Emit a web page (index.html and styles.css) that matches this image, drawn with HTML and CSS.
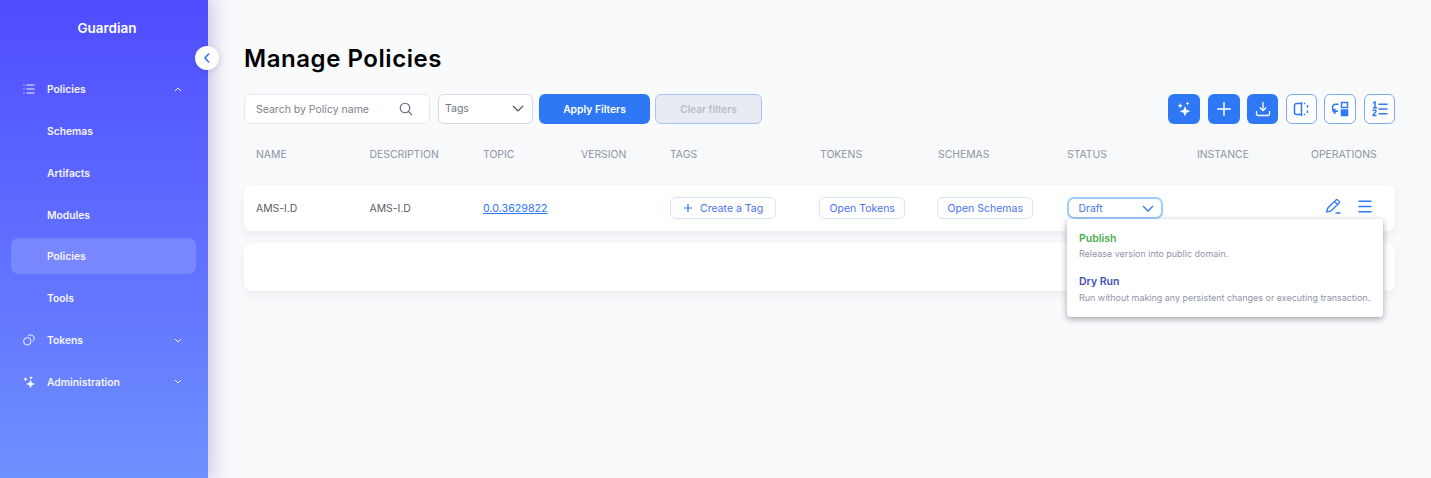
FILE: index.html
```html
<!DOCTYPE html>
<html lang="en">
<head>
<meta charset="utf-8">
<title>Manage Policies</title>
<link rel="stylesheet" href="styles.css">
</head>
<body>
<div class="app">
  <aside class="sidebar">
    <div class="brand">Guardian</div>
    <nav class="nav">
      <a class="nav-item">
        <svg class="nav-icon" viewBox="0 0 12 12"><path d="M3.500 2h8M3.500 6h8M3.500 10h8M.5 2h1M.5 6h1M.5 10h1"/></svg>
        <span class="nav-label">Policies</span>
        <svg class="nav-caret" viewBox="0 0 8 5"><path d="M1 4l3-3 3 3"/></svg>
      </a>
      <a class="nav-item">
        <span class="nav-label">Schemas</span>
      </a>
      <a class="nav-item">
        <span class="nav-label">Artifacts</span>
      </a>
      <a class="nav-item">
        <span class="nav-label">Modules</span>
      </a>
      <a class="nav-item active">
        <span class="nav-label">Policies</span>
      </a>
      <a class="nav-item">
        <span class="nav-label">Tools</span>
      </a>
      <a class="nav-item">
        <svg class="nav-icon" viewBox="0 0 12 12"><circle cx="4.300" cy="7.300" r="3.700"/><path d="M4.800 2.200A3.700 3.700 0 0 1 11.300 4.300a3.700 3.700 0 0 1-1.800 3.100"/></svg>
        <span class="nav-label">Tokens</span>
        <svg class="nav-caret" viewBox="0 0 8 5"><path d="M1 1l3 3 3-3"/></svg>
      </a>
      <a class="nav-item">
        <svg class="nav-icon solid" viewBox="0 0 12 12"><path d="M7.500 3.500l1.300 3.200 3.200 1.300-3.200 1.300-1.300 3.200-1.300-3.200L3 8l3.200-1.300zM2.500 1l.7 1.500 1.500.7-1.500.7-.7 1.500-.7-1.500-1.500-.7 1.500-.7zM8 0l.6 1.200 1.200.6-1.200.6L8 3.600l-.6-1.200-1.200-.6 1.200-.6z"/></svg>
        <span class="nav-label">Administration</span>
        <svg class="nav-caret" viewBox="0 0 8 5"><path d="M1 1l3 3 3-3"/></svg>
      </a>
    </nav>
  </aside>
  <button class="collapse" aria-label="Collapse">
    <svg viewBox="0 0 8 12"><path d="M6 1.500L2 6l4 4.500"/></svg>
  </button>

  <main class="main">
    <h1 class="title">Manage Policies</h1>

    <div class="toolbar">
      <div class="search">
        <span class="search-text">Search by Policy name</span>
        <svg class="search-icon" viewBox="0 0 14 14"><circle cx="6" cy="6" r="4.800"/><path d="M9.500 9.500l3.500 3.500"/></svg>
      </div>
      <div class="tags-select">
        <span>Tags</span>
        <svg viewBox="0 0 12 7"><path d="M1 1l5 5 5-5"/></svg>
      </div>
      <button class="btn-apply">Apply Filters</button>
      <button class="btn-clear">Clear filters</button>
      <div class="actions">
        <button class="act solid" aria-label="AI search">
          <svg viewBox="0 0 16 16" class="fill"><path d="M9 5l1.500 3.800L14.300 10.300l-3.800 1.500L9 15.600l-1.500-3.800-3.800-1.500 3.800-1.500zM4.200 2l.8 1.900 1.900.8-1.900.8-.8 1.900-.8-1.900-1.900-.8 1.900-.8zM11.500 .6l.6 1.300 1.300.6-1.300.6-.6 1.300-.6-1.300-1.300-.6 1.300-.6z"/></svg>
        </button>
        <button class="act solid" aria-label="Create">
          <svg viewBox="0 0 14 14"><path d="M7 1v12M1 7h12"/></svg>
        </button>
        <button class="act solid narrow" aria-label="Import">
          <svg viewBox="0 0 16 16"><path d="M8 1v8.500M4.800 6.500L8 9.700l3.200-3.200M1.500 10v2.800a1.700 1.700 0 0 0 1.700 1.700h9.600a1.700 1.700 0 0 0 1.700-1.700V10"/></svg>
        </button>
        <button class="act outline narrow" aria-label="Compare">
          <svg class="bold" viewBox="0 0 16 16"><path d="M8.500 2.500H3.500a2 2 0 0 0-2 2v7a2 2 0 0 0 2 2h5zM8.500 1v14M10.800 2.500h1.500M10.800 13.500h1.500M14.500 4v2.500M14.500 9.500V12"/></svg>
        </button>
        <button class="act outline" aria-label="Wizard">
          <svg class="wide bold" viewBox="0 0 18 16"><path d="M10.500 1.500h6v5h-6zM7.500 3.200H5a3.600 3.600 0 0 0-3.500 3.600A3.600 3.600 0 0 0 4.500 10.300H7M4.500 8l-2.300 2.300 2.300 2.300"/><path class="fillpath" d="M10.500 9h6v5.500h-6z"/></svg>
        </button>
        <button class="act outline narrow" aria-label="List">
          <svg class="bold" viewBox="0 0 16 16"><path d="M6.500 3.200h9M6.500 8h9M6.500 12.800h9M1.300 2.200L3 1v5.500M1 6.700h4M1 10.300a1.500 1.500 0 0 1 3 .2c0 1.300-3 2.400-3 4h3.600"/></svg>
        </button>
      </div>
    </div>

    <div class="table">
      <div class="row head">
        <div>NAME</div><div>DESCRIPTION</div><div>TOPIC</div><div>VERSION</div><div>TAGS</div><div>TOKENS</div><div>SCHEMAS</div><div>STATUS</div><div>INSTANCE</div><div>OPERATIONS</div>
      </div>
      <div class="row body">
        <div>AMS-I.D</div>
        <div>AMS-I.D</div>
        <div><a class="link">0.0.3629822</a></div>
        <div></div>
        <div><button class="pill tag"><svg viewBox="0 0 10 10"><path d="M5 1v8M1 5h8"/></svg>Create a Tag</button></div>
        <div><button class="pill shifted">Open Tokens</button></div>
        <div><button class="pill shifted">Open Schemas</button></div>
        <div class="status-cell">
          <div class="status"><span>Draft</span><svg viewBox="0 0 12 7"><path d="M1 1l5 5 5-5"/></svg></div>
          <div class="menu">
            <div class="menu-item">
              <div class="menu-title green">Publish</div>
              <div class="menu-desc">Release version into public domain.</div>
            </div>
            <div class="menu-item">
              <div class="menu-title indigo">Dry Run</div>
              <div class="menu-desc">Run without making any persistent changes or executing transaction.</div>
            </div>
          </div>
        </div>
        <div></div>
        <div class="ops">
          <svg class="op-edit" viewBox="0 0 15 15"><path d="M.8 13l.9-3.800L9.800 1.100a1.500 1.500 0 0 1 2.100 0l1 1a1.500 1.500 0 0 1 0 2.100L4.700 12.200zM8.500 2.500l3 3M9.500 14h5"/></svg>
          <svg class="op-menu" viewBox="0 0 14 13"><path d="M.5 1.200h13M.5 6.500h13M.5 11.800h13"/></svg>
        </div>
      </div>
      <div class="row empty"></div>
    </div>
  </main>
</div>
</body>
</html>
```
FILE: styles.css
```css
* { box-sizing: border-box; }
html, body { margin: 0; height: 100%; overflow: hidden; }
body { font-family: Inter, "Liberation Sans", sans-serif; background: #f9fafc; color: #23252e; }
button { font-family: inherit; cursor: pointer; }
.app { display: flex; height: 478px; position: relative; }

.sidebar {
  width: 208px; flex: none; height: 100%;
  background: linear-gradient(180deg, #4f4cff 0%, #6f90ff 100%);
  box-shadow: 0 0 20px 4px rgba(94, 66, 170, .3);
  color: #fff; padding: 0 12px 0 11px; position: relative; z-index: 2;
}
.brand { font-size: 13.500px; font-weight: 600; text-align: center; height: 57px; padding: 20px 1px 0 8px; line-height: 17px; }
.nav { display: flex; flex-direction: column; gap: 5.800px; margin-top: 14.300px; }
.nav-item { height: 36px; display: flex; align-items: center; padding: 0 14px 0 12px; border-radius: 8px; position: relative; }
.nav-item.active { background: rgba(255,255,255,.16); }
.nav-label { position: absolute; left: 36px; font-size: 10.300px; font-weight: 600; line-height: 14px; color: #f4f5ff; }
.nav-icon { width: 12px; height: 12px; fill: none; stroke: #f4f5ff; stroke-width: 1; }
.nav-icon.solid { fill: #fff; stroke: none; }
.nav-caret { width: 8px; height: 5px; margin-left: auto; fill: none; stroke: #eef0ff; stroke-width: 1; }

.collapse {
  position: absolute; left: 195px; top: 46px; z-index: 3;
  width: 24px; height: 24px; border: 0; border-radius: 50%; padding: 0;
  background: #fff; display: flex; align-items: center; justify-content: center;
  box-shadow: 0 2px 6px rgba(60, 60, 120, .18);
}
.collapse svg { width: 8px; height: 12px; fill: none; stroke: #2f7bf5; stroke-width: 1.600; }

.main { flex: 1; min-width: 0; padding: 44px 36px 0; }
.title { margin: 0; font-size: 24px; font-weight: 600; line-height: 29px; color: #000; letter-spacing: .55px; }

.toolbar { display: flex; align-items: stretch; height: 30px; margin-top: 21px; }
.search {
  width: 186px; background: #fff; border: 1px solid #e4e8f1; border-radius: 6px;
  display: flex; align-items: center; justify-content: space-between; padding: 0 16px 0 11px;
  font-size: 10.500px; color: #7b7f8c;
}
.search-text { padding-top: 1px; }
.search-icon { width: 14px; height: 14px; fill: none; stroke: #5f6675; stroke-width: 1.100; }
.tags-select {
  width: 95px; margin-left: 8px; background: #fff; border: 1px solid #d7dae2; border-radius: 6px;
  display: flex; align-items: center; justify-content: space-between; padding: 0 8px 2px 6px;
  font-size: 10.500px; color: #737785;
}
.tags-select svg { width: 12px; height: 7px; fill: none; stroke: #4b5160; stroke-width: 1.200; }
.btn-apply {
  width: 111px; margin-left: 6px; border: 0; border-radius: 6px; background: #2e78f6; color: #fff;
  font-size: 10.300px; font-weight: 600;
}
.btn-clear {
  width: 107px; margin-left: 5px; border: 1px solid #a6c4f5; border-radius: 6px; background: #e8ebf2; color: #b6bcc9;
  font-size: 10px; font-weight: 600;
}
.actions { margin-left: auto; display: flex; gap: 7.600px; }
.act {
  width: 32px; height: 30px; border-radius: 6px; padding: 0; display: flex; align-items: center; justify-content: center;
}
.act.narrow { width: 31px; }
.act.solid { background: #2e78f6; border: 0; }
.act.outline { background: #fff; border: 1px solid #7ea9f2; }
.act svg { width: 16px; height: 16px; fill: none; stroke-width: 1.300; }
.act svg.wide { width: 18px; }
.act.solid svg { stroke: #fff; }
.act.solid svg.fill { fill: #fff; stroke: none; }
.act.outline svg { stroke: #2e78f6; }
.act.outline svg.bold { stroke-width: 1.500; }
.act .fillpath { fill: #2e78f6; }

.table { margin-top: 11px; }
.row {
  display: grid;
  grid-template-columns: 113.500px 113.500px 98px 89px 150px 118px 129px 130px 114px 95px;
  padding-left: 12px; align-items: center; font-size: 10.400px;
}
.row.head { height: 38px; color: #8d93a4; background: #f8f9fb; border-radius: 8px 8px 0 0; }
.row.body, .row.empty { background: #fff; border-radius: 8px; box-shadow: 0 4px 10px rgba(40, 50, 80, .07); }
.row.body { height: 46px; margin-top: 12px; color: #5a5e69; position: relative; z-index: 1; }
.row.empty { height: 48px; margin-top: 12px; }
.link { color: #2e78f6; text-decoration: underline; font-size: 10.700px; }
.pill {
  height: 22px; border: 1px solid #d8e2fb; border-radius: 6px; background: #fff; color: #4a74f0;
  font-size: 10.500px; padding: 0 9.500px; display: inline-flex; align-items: center;
}
.pill.shifted { margin-left: -1px; }
.pill.tag { padding: 0 12px; }
.pill svg { width: 10px; height: 10px; margin-right: 7px; fill: none; stroke: #2e78f6; stroke-width: 1.200; }
.status-cell { position: relative; }
.status {
  width: 96px; height: 22px; border: 2.500px solid #9dcdfd; border-radius: 7px;
  display: flex; align-items: center; justify-content: space-between; padding: 0 7px 0 9.500px; color: #4a74f0; background: #fff;
}
.status svg { width: 12px; height: 7px; fill: none; stroke: #2e78f6; stroke-width: 1.300; }
.menu {
  position: absolute; left: 0; top: 22px; width: 316px; height: 98px; background: #fff; border-radius: 4px;
  box-shadow: 0 2px 6px rgba(30, 30, 50, .4); padding: 12.500px 12px 0; z-index: 5;
}
.menu-item + .menu-item { margin-top: 15px; }
.menu-title { font-size: 10.500px; font-weight: 600; line-height: 14px; }
.menu-title.green { color: #4caf50; }
.menu-title.indigo { color: #3f51b5; }
.menu-desc { font-size: 8.950px; line-height: 12px; margin-top: 2.500px; color: #9095a6; white-space: nowrap; }
.ops { display: flex; gap: 17px; align-items: center; padding: 0 0 3px 15px; }
.op-edit { width: 15px; height: 15px; fill: none; stroke: #2e78f6; stroke-width: 1.300; }
.op-menu { width: 14px; height: 13px; fill: none; stroke: #2e78f6; stroke-width: 1.500; }
```
